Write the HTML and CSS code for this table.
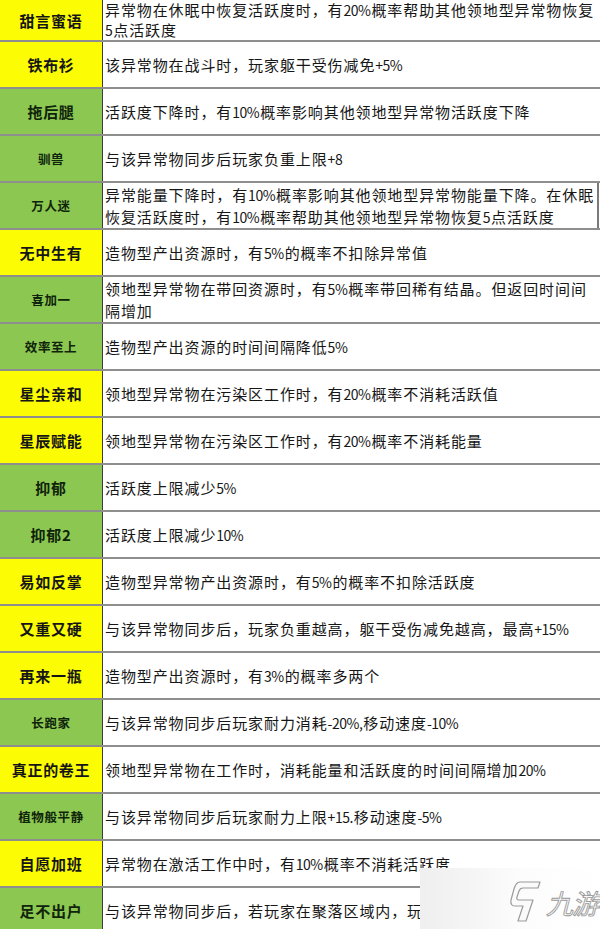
FILE: index.html
```html
<!DOCTYPE html>
<html lang="zh-CN">
<head>
<meta charset="utf-8">
<title>异常物词条</title>
<link rel="stylesheet" href="styles.css">
</head>
<body>
<div class="sheet">
  <div class="row first"><div class="name yellow big">甜言蜜语</div><div class="desc"><p class="t">异常物在休眠中恢复活跃度时，有<span class="n">20%</span>概率帮助其他领地型异常物恢复<br><span class="n">5</span>点活跃度</p></div></div>
  <div class="row"><div class="name yellow big">铁布衫</div><div class="desc"><p class="t">该异常物在战斗时，玩家躯干受伤减免<span class="n">+5%</span></p></div></div>
  <div class="row"><div class="name green big">拖后腿</div><div class="desc"><p class="t">活跃度下降时，有<span class="n">10%</span>概率影响其他领地型异常物活跃度下降</p></div></div>
  <div class="row"><div class="name green small">驯兽</div><div class="desc"><p class="t">与该异常物同步后玩家负重上限<span class="n">+8</span></p></div></div>
  <div class="row boxed"><div class="name green small">万人迷</div><div class="desc"><p class="t">异常能量下降时，有<span class="n">10%</span>概率影响其他领地型异常物能量下降。在休眠<br>恢复活跃度时，有<span class="n">10%</span>概率帮助其他领地型异常物恢复<span class="n">5</span>点活跃度</p></div></div>
  <div class="row"><div class="name yellow big">无中生有</div><div class="desc"><p class="t">造物型产出资源时，有<span class="n">5%</span>的概率不扣除异常值</p></div></div>
  <div class="row"><div class="name green small">喜加一</div><div class="desc"><p class="t">领地型异常物在带回资源时，有<span class="n">5%</span>概率带回稀有结晶。但返回时间间<br>隔增加</p></div></div>
  <div class="row"><div class="name green small">效率至上</div><div class="desc"><p class="t">造物型产出资源的时间间隔降低<span class="n">5%</span></p></div></div>
  <div class="row"><div class="name yellow big">星尘亲和</div><div class="desc"><p class="t">领地型异常物在污染区工作时，有<span class="n">20%</span>概率不消耗活跃值</p></div></div>
  <div class="row"><div class="name yellow big">星辰赋能</div><div class="desc"><p class="t">领地型异常物在污染区工作时，有<span class="n">20%</span>概率不消耗能量</p></div></div>
  <div class="row"><div class="name green big">抑郁</div><div class="desc"><p class="t">活跃度上限减少<span class="n">5%</span></p></div></div>
  <div class="row"><div class="name green big">抑郁2</div><div class="desc"><p class="t">活跃度上限减少<span class="n">10%</span></p></div></div>
  <div class="row"><div class="name yellow big">易如反掌</div><div class="desc"><p class="t">造物型异常物产出资源时，有<span class="n">5%</span>的概率不扣除活跃度</p></div></div>
  <div class="row"><div class="name yellow big">又重又硬</div><div class="desc"><p class="t">与该异常物同步后，玩家负重越高，躯干受伤减免越高，最高<span class="n">+15%</span></p></div></div>
  <div class="row"><div class="name yellow big">再来一瓶</div><div class="desc"><p class="t">造物型产出资源时，有<span class="n">3%</span>的概率多两个</p></div></div>
  <div class="row"><div class="name green small">长跑家</div><div class="desc"><p class="t">与该异常物同步后玩家耐力消耗<span class="n">-20%,</span>移动速度<span class="n">-10%</span></p></div></div>
  <div class="row"><div class="name yellow big">真正的卷王</div><div class="desc"><p class="t">领地型异常物在工作时，消耗能量和活跃度的时间间隔增加<span class="n">20%</span></p></div></div>
  <div class="row"><div class="name green small">植物般平静</div><div class="desc"><p class="t">与该异常物同步后玩家耐力上限<span class="n">+15.</span>移动速度<span class="n">-5%</span></p></div></div>
  <div class="row"><div class="name yellow big">自愿加班</div><div class="desc"><p class="t">异常物在激活工作中时，有<span class="n">10%</span>概率不消耗活跃度</p></div></div>
  <div class="row"><div class="name green big">足不出户</div><div class="desc"><p class="t">与该异常物同步后，若玩家在聚落区域内，玩家负重上限增加</p></div></div>

  <div class="watermark">
    <svg class="wm-logo" width="34" height="44" viewBox="0 0 34 44">
      <path d="M12 3 L32 3 L30 9 L15 9 Q12 9 11 12 L9 18 Q8 21 11 21 L25 21 L18 42 L10 42 L15 27 L7 27 Q2 27 3 21 L6 10 Q8 3 12 3 Z" fill="#fafafa" stroke="#9a9a9a" stroke-width="1.2" stroke-linejoin="round"/>
    </svg>
    <span class="wm-text">九游</span>
  </div>
</div>
</body>
</html>
```

FILE: styles.css
```css
* { box-sizing: border-box; }

html, body {
  margin: 0;
  padding: 0;
  background: #ffffff;
}

body {
  width: 600px;
  height: 929px;
  overflow: hidden;
  font-family: "Noto Sans CJK SC", "Noto Sans", sans-serif;
}

.sheet {
  position: relative;
  width: 600px;
  height: 929px;
  overflow: hidden;
}

.row {
  display: grid;
  grid-template-columns: 103px 1fr;
  height: 47px;
  border-bottom: 2px solid #8e8e8e;
}

.row.first {
  height: 42px;
}

.row.first .t {
  line-height: 20px;
}

.name {
  display: flex;
  align-items: center;
  justify-content: center;
  border-right: 1px solid #3c3c3c;
  font-weight: 700;
  color: #151515;
}

.name.yellow { background: #fcfc04; }
.name.green { background: #8cc752; color: #0f240a; }

.name.big {
  font-size: 15px;
  letter-spacing: 0.7px;
}

.name.small {
  font-size: 12.5px;
  letter-spacing: 0.6px;
}

.desc {
  display: flex;
  align-items: center;
  padding-left: 2px;
  min-width: 0;
  overflow: hidden;
}

.t {
  margin: 0;
  font-size: 15px;
  letter-spacing: 0.9px;
  line-height: 21px;
  color: #161616;
  white-space: nowrap;
}

.n {
  font-size: 14px;
  letter-spacing: -0.5px;
  margin-right: 1px;
}

.row.boxed .desc {
  border-right: 2px solid #7a7a7a;
  margin-right: 1px;
}

.watermark {
  position: absolute;
  left: 420px;
  top: 868px;
  width: 180px;
  height: 61px;
  background: linear-gradient(to right, #efefef 0%, #f4f4f4 25%, #fcfcfc 55%, #ffffff 100%);
  display: flex;
  align-items: center;
  padding-left: 88px;
  gap: 4px;
}

.wm-logo {
  display: block;
  margin-top: 4px;
}

.wm-text {
  font-family: "Noto Sans CJK SC", sans-serif;
  font-size: 27px;
  font-style: italic;
  font-weight: 400;
  color: #fbfbfb;
  -webkit-text-stroke: 0.9px #9a9a9a;
  letter-spacing: -1px;
  margin-top: 8px;
}
```
